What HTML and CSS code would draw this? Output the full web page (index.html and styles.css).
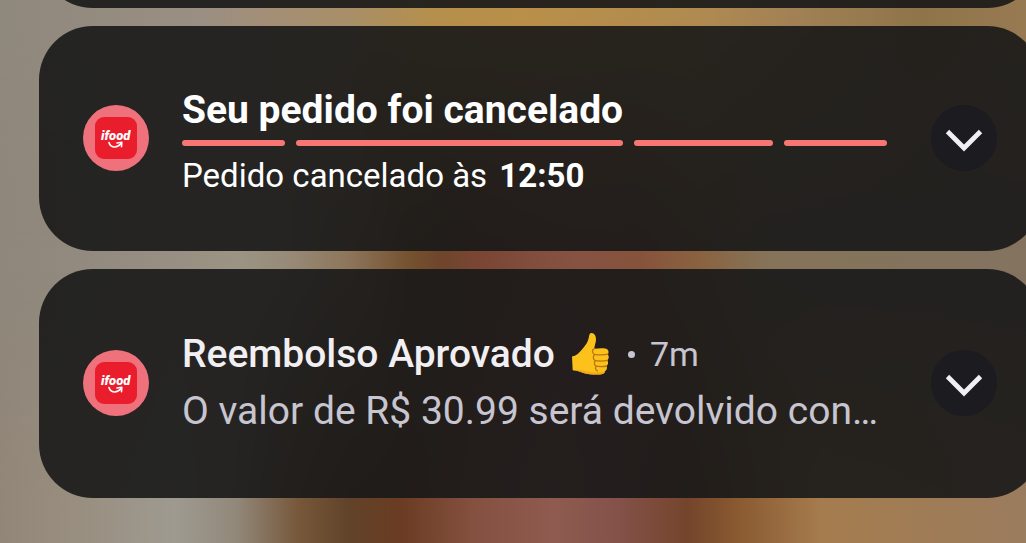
FILE: index.html
```html
<!DOCTYPE html>
<html lang="pt-BR">
<head>
  <meta charset="UTF-8" />
  <meta name="viewport" content="width=device-width, initial-scale=1.0"/>
  <title>Notificações</title>
  <link rel="stylesheet" href="styles.css">
</head>
<body>

  <main class="stack">
    <div class="card previous"></div>

    <article class="card">
      <svg class="app-icon" viewBox="0 0 66 66" role="img" aria-label="ifood">
        <circle cx="33" cy="33" r="33" fill="#ee717c"/>
        <rect x="12" y="12" width="42" height="42" rx="9" fill="#ea1d2c"/>
        <text class="logo-text" x="18" y="35">ifood</text>
        <path d="M26 37.500c1.500 5.500 8 6 12 1" fill="none" stroke="#fff" stroke-width="1.600" stroke-linecap="round"/>
        <path d="M34 38l4.800-.8-.3 4.600" fill="none" stroke="#fff" stroke-width="1.600" stroke-linecap="round" stroke-linejoin="round"/>
      </svg>
      <div class="content order">
        <h2 class="title strong">Seu pedido foi cancelado</h2>
        <div class="progress">
          <span class="step short"></span>
          <span class="step long"></span>
          <span class="step medium"></span>
          <span class="step short"></span>
        </div>
        <p class="status">Pedido cancelado às <b>12:50</b></p>
      </div>
      <button class="expand" type="button" aria-label="Expandir">
        <svg viewBox="0 0 66 66"><path d="M16.500 26.500L33 43l16.500-16.500" fill="none" stroke="currentColor" stroke-width="4.800"/></svg>
      </button>
    </article>

    <article class="card refund">
      <svg class="app-icon" viewBox="0 0 66 66" role="img" aria-label="ifood">
        <circle cx="33" cy="33" r="33" fill="#ee717c"/>
        <rect x="12" y="12" width="42" height="42" rx="9" fill="#ea1d2c"/>
        <text class="logo-text" x="18" y="35">ifood</text>
        <path d="M26 37.500c1.500 5.500 8 6 12 1" fill="none" stroke="#fff" stroke-width="1.600" stroke-linecap="round"/>
        <path d="M34 38l4.800-.8-.3 4.600" fill="none" stroke="#fff" stroke-width="1.600" stroke-linecap="round" stroke-linejoin="round"/>
      </svg>
      <div class="content">
        <div class="heading">
          <h2 class="title">Reembolso Aprovado</h2>
          <svg class="thumb" viewBox="0 0 38 44" role="img" aria-label="Joinha">
            <path d="M1 24.500C5 24 8 21 11 17.500c3.500-4 6-7.500 6.800-12C18.200 3 18.600 1 20.500 1c3 0 4.500 3 4.500 6.500 0 3-1.500 6-1.700 9.200 3.500-.5 8-.8 11-.2 3.200.7 4 3.500 2.500 5.700 1.400 2 1.200 4.600-.4 6.200 1.200 2 .8 4.400-.8 5.600.8 2 .2 4.300-1.600 5.300-.4 2.300-2.500 3.200-5.500 3.200-6 0-11 .2-16-1.500-3.500-1.200-6.500-2.500-10.800-2.700z" fill="#fcc21b"/>
            <path d="M1.700 38.300c4.300.2 7.300 1.500 10.800 2.700 5 1.700 10 1.500 16 1.500 3 0 5.100-.9 5.500-3.200-5 1.500-12 1.700-18 .2-5-1.300-8.500-2.500-14.300-1.200z" fill="#f5a81c"/>
            <path d="M23.300 16.700c-2.300.8-2.600 4.300.2 5.800-1.800 1.800-1.500 5 .8 6.200-1.500 1.500-1.200 4.300.9 5.500-1.200 1.500-.8 3.800 1.200 4.800M23.500 22.500c4.500.3 9 .7 13.300-.3M24.300 28.700c4 .6 8 .6 12-.3M25.200 34.200c3.500.6 7 .6 10.400-.2" fill="none" stroke="#b87510" stroke-width="1.300" stroke-linecap="round"/>
          </svg>
          <span class="dot"></span>
          <time class="time">7m</time>
        </div>
        <p class="message">O valor de R$ 30.99 será devolvido con…</p>
      </div>
      <button class="expand" type="button" aria-label="Expandir">
        <svg viewBox="0 0 66 66"><path d="M16.500 26.500L33 43l16.500-16.500" fill="none" stroke="currentColor" stroke-width="4.800"/></svg>
      </button>
    </article>
  </main>

</body>
</html>
```

FILE: styles.css
```css
* {
  box-sizing: border-box;
}
body {
  position: relative;
  min-height: 100vh;
  margin: 0;
  overflow: hidden;
  font-family: Roboto, "Liberation Sans", sans-serif;
  background: linear-gradient(90deg, #8f877b 0%, #938b80 10%, #9b9484 23%, #978b78 28%, #8d755a 34%, #74512f 40%, #6f452b 43%, #7b4634 47%, #865343 56%, #85523b 62%, #8a6240 68%, #85745a 75%, #84735f 100%);
}

/* blurred wallpaper: top and bottom colours fade into the middle ones */
body::before,
body::after {
  content: "";
  position: absolute;
  inset: 0;
  z-index: -1;
}
body::before {
  background: linear-gradient(90deg, #8f887d 0%, #9a8f82 20%, #a38e76 26%, #a88f68 34%, #b58f4c 42%, #b98f49 51%, #b08a50 68%, #a08055 78%, #8f7449 90%, #987a52 100%);
  mask-image: linear-gradient(#000 4%, transparent 46%);
}
body::after {
  background: linear-gradient(90deg, #928678 0%, #9a9082 9%, #9e9a90 17%, #92887a 23%, #77583b 29%, #61432a 34%, #6a3c22 39%, #84503f 46%, #8f5b50 54%, #84524a 60%, #74452c 67%, #8a5a30 72%, #a57c4e 80%, #9a7c5e 100%);
  mask-image: linear-gradient(transparent 50%, #000 92%);
}

.stack {
  display: flex;
  flex-direction: column;
  gap: 18px;
  margin: -112px -15px 0 39px;
}
.card {
  display: flex;
  align-items: center;
  padding: 55px 44px 56px;
  border-radius: 54px;
  background: rgba(24, 24, 24, 0.9);
}
.previous {
  height: 120px;
}
.refund {
  padding: 62px 44px 64px;
}
.app-icon {
  flex: none;
  width: 66px;
  height: 66px;
}
.logo-text {
  font-size: 13px;
  font-weight: 900;
  font-style: italic;
  fill: #fff;
}
.content {
  flex: 1;
  min-width: 0;
  margin: 0 44px 0 33px;
}
.order {
  padding-top: 6px;
}
.title {
  margin: 0;
  color: #f1eff2;
  font-size: 39px;
  font-weight: 500;
  line-height: 46px;
  white-space: nowrap;
}
.strong {
  color: #fff;
  font-weight: 700;
}

.progress {
  display: flex;
  gap: 11px;
  margin: 7px 0 11px;
}
.step {
  height: 6px;
  border-radius: 3px;
  background: #f77673;
}
.short {
  flex: 103;
}
.medium {
  flex: 139;
}
.long {
  flex: 326;
}
.status {
  margin: 0;
  color: #fff;
  font-size: 33px;
  line-height: 38px;
}
.status b {
  margin-left: 4px;
}

.heading {
  display: flex;
  align-items: center;
}
.thumb {
  width: 38px;
  height: 44px;
  margin-left: 16px;
}
.dot {
  width: 7px;
  height: 7px;
  margin: 0 15px 0 19px;
  border-radius: 50%;
  background: #c7c5d0;
}
.time {
  color: #c7c5d0;
  font-size: 34px;
  line-height: 46px;
}
.message {
  margin: 11px 0 0;
  color: #c7c5d0;
  font-size: 39px;
  line-height: 46px;
  white-space: nowrap;
}

.expand {
  flex: none;
  width: 66px;
  height: 66px;
  padding: 0;
  border: none;
  border-radius: 50%;
  background: #1b1b20;
  color: #f1eff6;
  cursor: pointer;
}
.expand svg {
  display: block;
  width: 66px;
  height: 66px;
}
```
